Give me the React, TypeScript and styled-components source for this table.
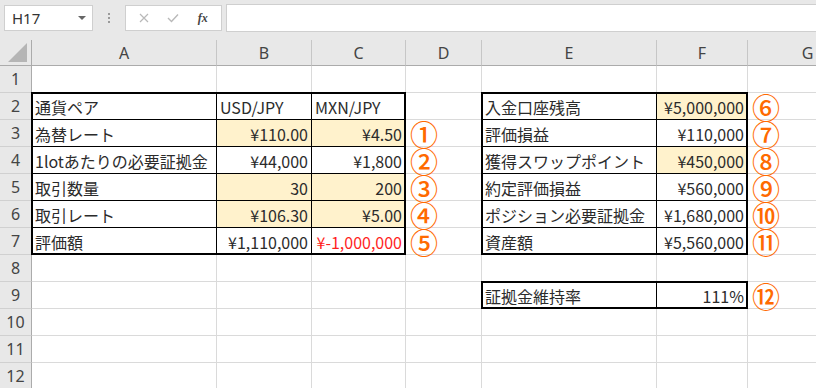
import React from "react";
import styled, { createGlobalStyle } from "styled-components";

const GlobalStyle = createGlobalStyle`
  html, body {
    margin: 0;
    padding: 0;
    background: #ffffff;
    overflow: hidden;
  }
  body {
    font-family: "Noto Sans CJK JP", "Noto Sans", sans-serif;
  }
`;

const COLUMNS = ["A", "B", "C", "D", "E", "F", "G"];
const COLUMN_WIDTHS = [185, 95, 94, 76, 175, 91, 120];
const ROW_COUNT = 12;

type Cell = {
  text: string;
  align?: "left" | "right";
  fill?: boolean;
  red?: boolean;
  mark?: boolean;
};

// row number -> column letter -> cell
const DATA: Record<number, Record<string, Cell>> = {
  2: {
    A: { text: "通貨ペア" },
    B: { text: "USD/JPY" },
    C: { text: "MXN/JPY" },
    E: { text: "入金口座残高" },
    F: { text: "¥5,000,000", align: "right", fill: true },
    G: { text: "⑥", mark: true },
  },
  3: {
    A: { text: "為替レート" },
    B: { text: "¥110.00", align: "right", fill: true },
    C: { text: "¥4.50", align: "right", fill: true },
    D: { text: "①", mark: true },
    E: { text: "評価損益" },
    F: { text: "¥110,000", align: "right" },
    G: { text: "⑦", mark: true },
  },
  4: {
    A: { text: "1lotあたりの必要証拠金" },
    B: { text: "¥44,000", align: "right" },
    C: { text: "¥1,800", align: "right" },
    D: { text: "②", mark: true },
    E: { text: "獲得スワップポイント" },
    F: { text: "¥450,000", align: "right", fill: true },
    G: { text: "⑧", mark: true },
  },
  5: {
    A: { text: "取引数量" },
    B: { text: "30", align: "right", fill: true },
    C: { text: "200", align: "right", fill: true },
    D: { text: "③", mark: true },
    E: { text: "約定評価損益" },
    F: { text: "¥560,000", align: "right" },
    G: { text: "⑨", mark: true },
  },
  6: {
    A: { text: "取引レート" },
    B: { text: "¥106.30", align: "right", fill: true },
    C: { text: "¥5.00", align: "right", fill: true },
    D: { text: "④", mark: true },
    E: { text: "ポジション必要証拠金" },
    F: { text: "¥1,680,000", align: "right" },
    G: { text: "⑩", mark: true },
  },
  7: {
    A: { text: "評価額" },
    B: { text: "¥1,110,000", align: "right" },
    C: { text: "¥-1,000,000", align: "right", red: true },
    D: { text: "⑤", mark: true },
    E: { text: "資産額" },
    F: { text: "¥5,560,000", align: "right" },
    G: { text: "⑪", mark: true },
  },
  9: {
    E: { text: "証拠金維持率" },
    F: { text: "111%", align: "right" },
    G: { text: "⑫", mark: true },
  },
};

// bordered ranges: [firstRow, lastRow, firstCol, lastCol] (cols 0 = A)
const RANGES: [number, number, number, number][] = [
  [2, 7, 0, 2],
  [2, 7, 4, 5],
  [9, 9, 4, 5],
];

const inRange = (row: number, col: number) =>
  RANGES.some(([r1, r2, c1, c2]) => row >= r1 && row <= r2 && col >= c1 && col <= c2);

/* ---------- formula bar ---------- */

const FormulaBar = styled.div`
  display: flex;
  align-items: center;
  height: 40px;
  padding: 0 0 4px 4px;
  box-sizing: border-box;
  background: #e8e8e8;
  gap: 4px;
`;

const NameBox = styled.div`
  display: flex;
  align-items: center;
  justify-content: space-between;
  width: 89px;
  height: 26px;
  box-sizing: border-box;
  padding: 0 6px 0 7px;
  background: #fff;
  border: 1px solid #cfcfcf;
  font-family: "Noto Sans", "Open Sans", sans-serif;
  font-size: 15px;
  color: #333;
`;

const Caret = styled.span`
  width: 0;
  height: 0;
  border-left: 4px solid transparent;
  border-right: 4px solid transparent;
  border-top: 4px solid #666;
`;

const Grip = styled.div`
  display: flex;
  flex-direction: column;
  gap: 2px;
  width: 24px;
  align-items: center;

  span {
    width: 2px;
    height: 2px;
    background: #9a9a9a;
  }
`;

const FxBox = styled.div`
  display: flex;
  align-items: center;
  justify-content: space-around;
  width: 97px;
  height: 26px;
  box-sizing: border-box;
  padding: 0 4px;
  background: #fff;
  border: 1px solid #cfcfcf;
`;

const FxLabel = styled.span`
  font-family: "Liberation Serif", "DejaVu Serif", serif;
  font-style: italic;
  font-weight: bold;
  font-size: 12px;
  color: #444;
`;

const FormulaInput = styled.div`
  flex: 1;
  height: 26px;
  background: #fff;
  border: 1px solid #cfcfcf;
  border-right: none;
`;

/* ---------- sheet ---------- */

const Sheet = styled.div`
  display: grid;
  grid-template-columns: 32px ${COLUMN_WIDTHS.map((w) => `${w}px`).join(" ")};
  grid-template-rows: 26px repeat(${ROW_COUNT}, 27px);
  height: 348px;
  overflow: hidden;
`;

const Corner = styled.div`
  grid-row: 1;
  grid-column: 1;
  display: flex;
  align-items: flex-end;
  justify-content: flex-end;
  padding: 0 4px 3px 0;
  background: #e8e8e8;
  border-right: 1px solid #ababab;
  border-bottom: 1px solid #ababab;

  &::after {
    content: "";
    width: 0;
    height: 0;
    border-left: 19px solid transparent;
    border-bottom: 19px solid #b5b5b5;
  }
`;

const ColumnHead = styled.div<{ $col: number }>`
  grid-row: 1;
  grid-column: ${(p) => p.$col};
  display: flex;
  align-items: center;
  justify-content: center;
  background: #e8e8e8;
  border-right: 1px solid #c6c6c6;
  border-bottom: 1px solid #ababab;
  font-family: "Noto Sans", sans-serif;
  font-size: 16px;
  color: #444;
`;

const RowHead = styled.div<{ $row: number }>`
  grid-row: ${(p) => p.$row};
  grid-column: 1;
  display: flex;
  align-items: center;
  justify-content: center;
  background: #e8e8e8;
  border-right: 1px solid #ababab;
  border-bottom: 1px solid #d0d0d0;
  font-family: "Noto Sans", sans-serif;
  font-size: 16px;
  color: #444;
`;

const CellBox = styled.div<{
  $row: number;
  $col: number;
  $align: "left" | "right";
  $fill: boolean;
  $boxed: boolean;
}>`
  grid-row: ${(p) => p.$row};
  grid-column: ${(p) => p.$col};
  display: flex;
  align-items: center;
  justify-content: ${(p) => (p.$align === "right" ? "flex-end" : "flex-start")};
  padding: 1px 3px 0;
  min-width: 0;
  white-space: nowrap;
  background: ${(p) => (p.$fill ? "#fff2cc" : "transparent")};
  border-right: 1px solid ${(p) => (p.$boxed ? "#000" : "#dadada")};
  border-bottom: 1px solid ${(p) => (p.$boxed ? "#000" : "#dadada")};
`;

const Value = styled.span<{ $red: boolean }>`
  font-size: 16px;
  line-height: 1;
  color: ${(p) => (p.$red ? "#ff1f1f" : "#2b2b2b")};
`;

// circled reference number beside a row
const Mark = styled.span`
  margin-left: 1px;
  font-size: 28px;
  font-weight: 500;
  line-height: 22px;
  color: #ff6a00;
`;

const Frame = styled.div<{ $rows: string; $cols: string }>`
  grid-row: ${(p) => p.$rows};
  grid-column: ${(p) => p.$cols};
  margin: -1px 0 0 -1px;
  border: 2px solid #000;
  pointer-events: none;
`;

const Cross = () => (
  <svg width="10" height="10" viewBox="0 0 10 10">
    <path d="M1 1 L9 9 M9 1 L1 9" stroke="#b9b9b9" strokeWidth="1.2" fill="none" />
  </svg>
);

const Check = () => (
  <svg width="12" height="10" viewBox="0 0 12 10">
    <path d="M1 5 L4.5 8.5 L11 1.5" stroke="#b9b9b9" strokeWidth="1.4" fill="none" />
  </svg>
);

export default function App() {
  const rows = Array.from({ length: ROW_COUNT }, (_, i) => i + 1);

  return (
    <>
      <GlobalStyle />
      <FormulaBar>
        <NameBox>
          H17
          <Caret />
        </NameBox>
        <Grip>
          <span />
          <span />
          <span />
        </Grip>
        <FxBox>
          <Cross />
          <Check />
          <FxLabel>fx</FxLabel>
        </FxBox>
        <FormulaInput />
      </FormulaBar>

      <Sheet>
        <Corner />
        {COLUMNS.map((c, i) => (
          <ColumnHead key={c} $col={i + 2}>
            {c}
          </ColumnHead>
        ))}

        {rows.map((r) => (
          <React.Fragment key={r}>
            <RowHead $row={r + 1}>{r}</RowHead>
            {COLUMNS.map((c, ci) => {
              const cell = DATA[r]?.[c];
              return (
                <CellBox
                  key={c}
                  $row={r + 1}
                  $col={ci + 2}
                  $align={cell?.align ?? "left"}
                  $fill={!!cell?.fill}
                  $boxed={inRange(r, ci)}
                >
                  {cell &&
                    (cell.mark ? (
                      <Mark>{cell.text}</Mark>
                    ) : (
                      <Value $red={!!cell.red}>{cell.text}</Value>
                    ))}
                </CellBox>
              );
            })}
          </React.Fragment>
        ))}

        {RANGES.map(([r1, r2, c1, c2]) => (
          <Frame
            key={`${r1}-${c1}`}
            $rows={`${r1 + 1} / ${r2 + 2}`}
            $cols={`${c1 + 2} / ${c2 + 3}`}
          />
        ))}
      </Sheet>
    </>
  );
}
